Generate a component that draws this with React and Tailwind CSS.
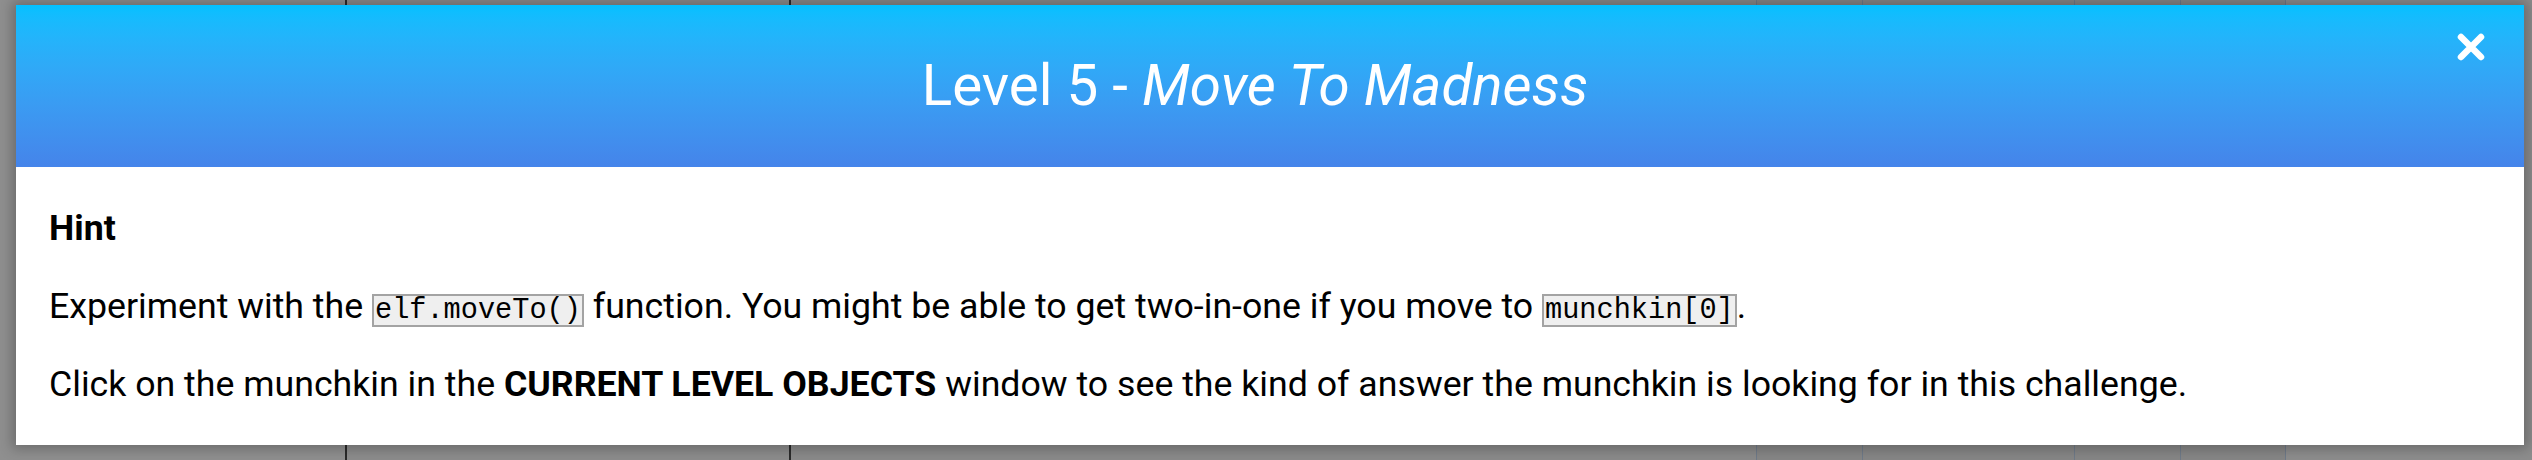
import React from "react";

function CloseIcon() {
  return (
    <svg width="30" height="30" viewBox="0 0 30 30" fill="none">
      <path d="M5 5 L25 25 M25 5 L5 25" stroke="#ffffff" strokeWidth="6.5" strokeLinecap="round" />
    </svg>
  );
}

function Code({ children }) {
  return (
    <code className="inline-block border-2 border-[#a3a3a3] bg-[#efefef] px-[1px] text-[28.6px] leading-[29px] text-black [font-family:'Liberation_Mono','Courier_New',monospace]">
      {children}
    </code>
  );
}

export default function App() {
  return (
    <div className="relative h-[460px] w-[2532px] overflow-hidden bg-[#8e8e8e] [font-family:Roboto,'Liberation_Sans',sans-serif]">
      <div className="flex h-full w-full">
        <div className="w-[347px] border-r-2 border-[#2a2a2a] bg-[#8f8f8f]" />
        <div className="w-[444px] border-r-2 border-[#2a2a2a] bg-[#8c8c8c]" />
        <div className="w-[965px] bg-[#8a8a8a]" />
        <div className="w-[106px] border-l border-[#6f7a88] bg-[#868686]" />
        <div className="w-[212px] border-l border-[#6f7a88] bg-[#868686]" />
        <div className="w-[106px] border-l border-[#6f7a88] bg-[#868686]" />
        <div className="w-[106px] border-l border-r border-[#6f7a88] bg-[#868686]" />
        <div className="flex-1 bg-[#8d8d8d]" />
      </div>
      <div className="absolute left-[16px] top-[5px] flex h-[440px] w-[2508px] flex-col bg-white shadow-[0_0_12px_4px_rgba(0,0,0,0.25)]">
        <div className="relative flex h-[162px] items-center justify-center bg-gradient-to-b from-[#04c0ff] to-[#4584ea] pr-[30px]">
          <h1 className="text-[56.5px] font-normal leading-none text-white">
            Level 5 - <em className="italic">Move To Madness</em>
          </h1>
          <button className="absolute right-[38px] top-[27px] flex h-[30px] w-[30px] items-center justify-center">
            <CloseIcon />
          </button>
        </div>
        <div className="flex flex-col gap-[34px] px-[33px] pt-[39px] text-[35.7px] leading-[44px] text-black">
          <p className="font-bold">Hint</p>
          <p>
            Experiment with the <Code>elf.moveTo()</Code> function. You might be able to get two-in-one if you move to{" "}
            <Code>munchkin[0]</Code>.
          </p>
          <p>
            Click on the munchkin in the <strong className="font-bold">CURRENT LEVEL OBJECTS</strong> window to see the kind of answer the munchkin is looking for in this challenge.
          </p>
        </div>
      </div>
    </div>
  );
}
